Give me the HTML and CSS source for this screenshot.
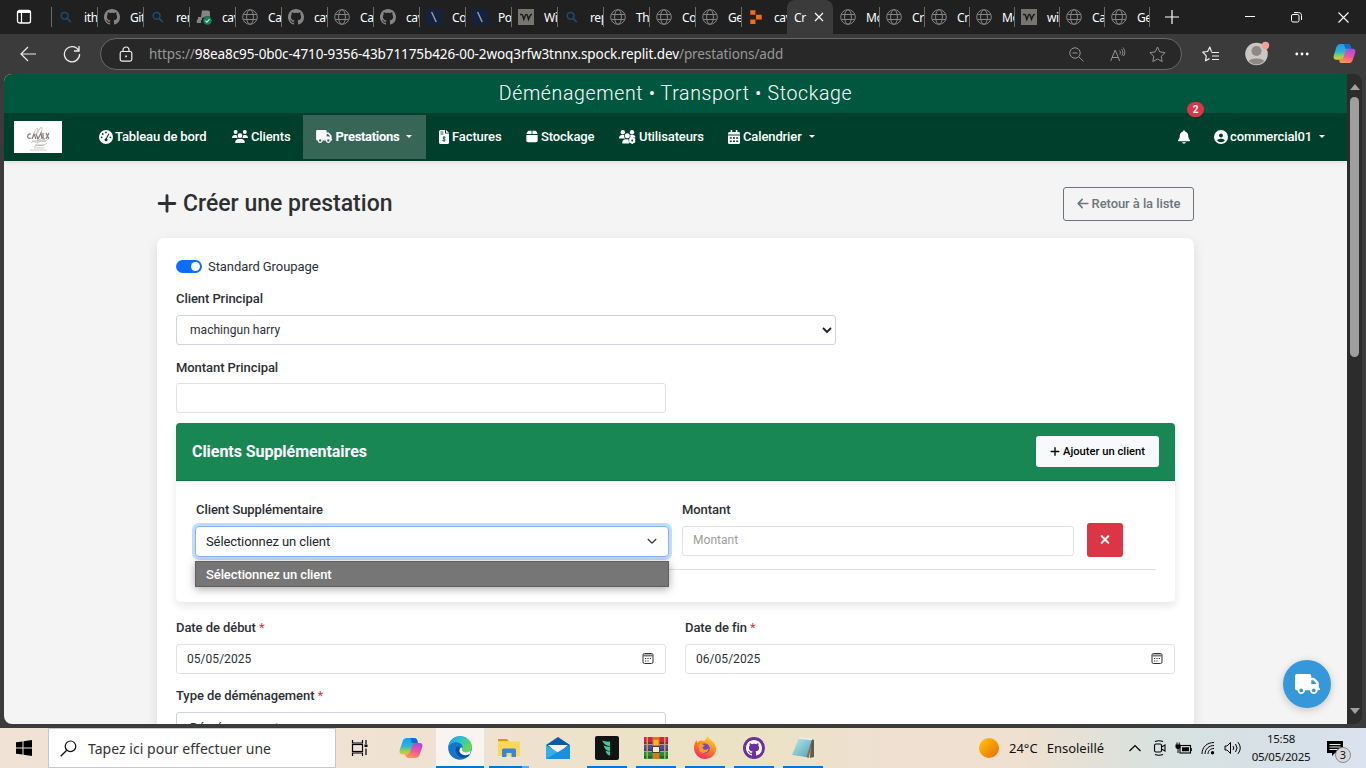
FILE: index.html
```html
<!DOCTYPE html>
<html lang="fr">
<head>
<meta charset="utf-8">
<title>Créer une prestation</title>
<link rel="stylesheet" href="styles.css">
</head>
<body>
<svg class="defs" width="0" height="0">
  <defs>
    <linearGradient id="gBlue" x1="0" y1="0" x2="0" y2="1"><stop offset="0" stop-color="#1b9cf0"/><stop offset=".5" stop-color="#2cb6d0"/><stop offset=".8" stop-color="#9ad14a"/><stop offset="1" stop-color="#f3c620"/></linearGradient>
    <linearGradient id="gPink" x1=".6" y1="0" x2=".3" y2="1"><stop offset="0" stop-color="#a64be8"/><stop offset=".5" stop-color="#f0569a"/><stop offset="1" stop-color="#ff9a50"/></linearGradient>
    <linearGradient id="gEdge" x1="0" y1="0" x2="1" y2=".5"><stop offset="0" stop-color="#1d9de0"/><stop offset=".5" stop-color="#2fc2c9"/><stop offset="1" stop-color="#66db4c"/></linearGradient>
    <linearGradient id="gSun" x1="0" y1="0" x2="1" y2="1"><stop offset="0" stop-color="#ffc90a"/><stop offset="1" stop-color="#ea6a05"/></linearGradient>
    <linearGradient id="gFox" x1=".8" y1="0" x2=".3" y2="1"><stop offset="0" stop-color="#ffe03a"/><stop offset=".45" stop-color="#ff8a1c"/><stop offset="1" stop-color="#f5246a"/></linearGradient>
    <linearGradient id="gNote" x1="0" y1="0" x2="1" y2="1"><stop offset="0" stop-color="#c4e8ee"/><stop offset="1" stop-color="#4ba3b8"/></linearGradient>
  </defs>
  <symbol id="globe" viewBox="0 0 16 16"><g fill="none" stroke="#858585"><circle cx="8" cy="8" r="7.3"/><ellipse cx="8" cy="8" rx="3.4" ry="7.3"/><path d="M1.3 5.5h13.4M1.3 10.5h13.4"/></g></symbol>
  <symbol id="github" viewBox="0 0 16 16"><path d="M8 0C3.58 0 0 3.58 0 8c0 3.54 2.29 6.53 5.47 7.59.4.07.55-.17.55-.38 0-.19-.01-.82-.01-1.49-2.01.37-2.53-.49-2.69-.94-.09-.23-.48-.94-.82-1.13-.28-.15-.68-.52-.01-.53.63-.01 1.08.58 1.23.82.72 1.21 1.87.87 2.33.66.07-.52.28-.87.51-1.07-1.78-.2-3.64-.89-3.64-3.95 0-.87.31-1.59.82-2.15-.08-.2-.36-1.02.08-2.12 0 0 .67-.21 2.2.82.64-.18 1.32-.27 2-.27s1.36.09 2 .27c1.53-1.04 2.2-.82 2.2-.82.44 1.1.16 1.92.08 2.12.51.56.82 1.27.82 2.15 0 3.07-1.87 3.75-3.65 3.95.29.25.54.73.54 1.48 0 1.07-.01 1.93-.01 2.2 0 .21.15.46.55.38A8.01 8.01 0 0016 8c0-4.42-3.58-8-8-8z" fill="currentColor"/></symbol>
  <symbol id="find" viewBox="0 0 16 16"><circle cx="6.6" cy="6.8" r="3.4" fill="none" stroke="#1c4a70" stroke-width="1.5"/><path d="M9.2 9.4l3.6 3.7" stroke="#1c4a70" stroke-width="1.8"/></symbol>
  <symbol id="slash" viewBox="0 0 16 16"><path d="M0 0h16v16H0z" fill="#15223f"/><path d="M5.6 3l4.6 10" stroke="#9a9a9a" stroke-width="1.5"/></symbol>
  <symbol id="wave" viewBox="0 0 16 16"><path d="M0 0h16v16H0z" fill="#77756f"/><path d="M2 5.500h1.500q1 0 1.300 1.500l1 3.300 1.700-4.300q.3-.5 1-.5 .7 0 1 1.200l1 3.600 1.500-3.500Q12.600 5.300 14 5.500" fill="none" stroke="#191919" stroke-width="1.400"/></symbol>
  <symbol id="access" viewBox="0 0 16 16"><path d="M6 1.500h6q2 0 2 2v4H9.500L6 9v2H5v3H1q-1-3 1-4v-2h3z" fill="#858585"/><circle cx="11.500" cy="11.500" r="4.300" fill="#11805c"/><path d="M9.400 11.600l1.500 1.500 2.700-3" fill="none" stroke="#c9e6dc" stroke-width="1.200"/></symbol>
  <symbol id="replit" viewBox="0 0 12 14"><path d="M1 1h4.500v4H1zM6 5h5v4.200H6zM1 9.200h4.500v4H1z" fill="#f96a0c"/></symbol>
  <symbol id="plus" viewBox="0 0 448 512"><path fill="currentColor" d="M256 80c0-17.700-14.300-32-32-32s-32 14.300-32 32V224H48c-17.700 0-32 14.300-32 32s14.300 32 32 32H192V432c0 17.700 14.300 32 32 32s32-14.300 32-32V288H400c17.700 0 32-14.300 32-32s-14.300-32-32-32H256V80z"/></symbol>
  <symbol id="truck" viewBox="0 0 640 512"><path fill="currentColor" d="M48 0C21.500 0 0 21.500 0 48V368c0 26.500 21.500 48 48 48H64c0 53 43 96 96 96s96-43 96-96H384c0 53 43 96 96 96s96-43 96-96h32c17.700 0 32-14.300 32-32s-14.300-32-32-32V288 256 237.300c0-17-6.700-33.300-18.700-45.300L512 114.700c-12-12-28.300-18.700-45.300-18.700H416V48c0-26.500-21.500-48-48-48H48zM416 160h50.700L544 237.300V256H416V160zM112 416a48 48 0 1 1 96 0 48 48 0 1 1 -96 0zm368-48a48 48 0 1 1 0 96 48 48 0 1 1 0-96z"/></symbol>
  <symbol id="cal" viewBox="0 0 14 14"><rect x="2" y="1.500" width="10" height="10" rx="1.500" fill="none" stroke="#333"/><path d="M2 3.500h10" stroke="#777" stroke-width="2"/><path d="M4 6.500h1.200M6.400 6.500h1.200M8.800 6.500H10M4 9h1.200M6.400 9h1.200" stroke="#333" stroke-width="1.200"/></symbol>
  <symbol id="copilot" viewBox="0 0 24 22"><path d="M8 1h7c2 0 3 1 3.500 3l.5 2c-3-.5-4.500.5-5.500 3.500L11.500 15c-.7 2-2 2.500-4 2.500H3.500C1 17.500 0 15.500.7 13L3.500 4.500C4.200 2.200 5.500 1 8 1z" fill="url(#gBlue)"/><path d="M11 1h4c2 0 3 1 3.500 3l.5 2h-5.500c-1.500 0-1.500-5-2.500-5z" fill="#1769d2"/><path d="M16 21H9.500c-2 0-2.700-1-3-2.500L6 17.500c3 .3 4.500-1 5.500-4l1.500-4.500C13.700 6.500 15 6 17 6h3.500c2.500 0 3.500 1.500 2.800 4L20.500 18c-.7 2-2 3-4.500 3z" fill="url(#gPink)"/></symbol>
</svg>

<header class="tabbar">
  <div class="workspace"><svg width="16" height="16" viewBox="0 0 16 16"><rect x="1.500" y="1.500" width="13" height="12.500" rx="2" fill="none" stroke="#fff" stroke-width="1.300"/><path d="M1.500 3h13" stroke="#fff" stroke-width="2"/><path d="M5.500 3v11" stroke="#fff" stroke-width="1.200"/></svg></div>
  <div class="tab"><svg class="fav"><use href="#find"/></svg><span>ith</span></div>
  <div class="tab"><svg class="fav"><use href="#github"/></svg><span>Git</span></div>
  <div class="tab"><svg class="fav"><use href="#find"/></svg><span>rer</span></div>
  <div class="tab"><svg class="fav"><use href="#access"/></svg><span>cav</span></div>
  <div class="tab"><svg class="fav"><use href="#globe"/></svg><span>Ca</span></div>
  <div class="tab"><svg class="fav"><use href="#github"/></svg><span>cav</span></div>
  <div class="tab"><svg class="fav"><use href="#globe"/></svg><span>Ca</span></div>
  <div class="tab"><svg class="fav"><use href="#github"/></svg><span>cav</span></div>
  <div class="tab"><svg class="fav"><use href="#slash"/></svg><span>Co</span></div>
  <div class="tab"><svg class="fav"><use href="#slash"/></svg><span>Po</span></div>
  <div class="tab"><svg class="fav"><use href="#wave"/></svg><span>Wi</span></div>
  <div class="tab"><svg class="fav"><use href="#find"/></svg><span>rep</span></div>
  <div class="tab"><svg class="fav"><use href="#globe"/></svg><span>Th</span></div>
  <div class="tab"><svg class="fav"><use href="#globe"/></svg><span>Co</span></div>
  <div class="tab"><svg class="fav"><use href="#globe"/></svg><span>Ge</span></div>
  <div class="tab"><svg class="fav"><use href="#replit"/></svg><span>cav</span></div>
  <div class="tab active"><span>Cr</span><svg width="10" height="10" viewBox="0 0 10 10"><path d="M1 1l8 8M9 1L1 9" stroke="#fff" stroke-width="1.200"/></svg></div>
  <div class="tab n first"><svg class="fav"><use href="#globe"/></svg><span>Mo</span></div>
  <div class="tab n"><svg class="fav"><use href="#globe"/></svg><span>Cr</span></div>
  <div class="tab n"><svg class="fav"><use href="#globe"/></svg><span>Cr</span></div>
  <div class="tab n"><svg class="fav"><use href="#globe"/></svg><span>Mo</span></div>
  <div class="tab n"><svg class="fav"><use href="#wave"/></svg><span>wi</span></div>
  <div class="tab n"><svg class="fav"><use href="#globe"/></svg><span>Ca</span></div>
  <div class="tab n end"><svg class="fav"><use href="#globe"/></svg><span>Ge</span></div>
  <svg class="newtab" width="14" height="14" viewBox="0 0 14 14"><path d="M7 0v14M0 7h14" stroke="#fff" stroke-width="1.200"/></svg>
  <div class="winbtns">
    <svg width="10" height="10" viewBox="0 0 10 10"><path d="M0 4.500h10" stroke="#fff"/></svg>
    <svg width="11" height="11" viewBox="0 0 11 11"><rect x=".5" y="2.500" width="7.500" height="7.500" rx="1.500" fill="none" stroke="#fff"/><path d="M3 .6h4.500c2 0 3 1 3 3V8" fill="none" stroke="#fff"/></svg>
    <svg width="11" height="11" viewBox="0 0 11 11"><path d="M.5.5l10 10M10.500.5l-10 10" stroke="#fff" stroke-width="1.100"/></svg>
  </div>
</header>

<div class="toolbar">
  <svg class="back" width="16" height="16" viewBox="0 0 16 16"><path d="M16 8H1M8 1L1 8l7 7" fill="none" stroke="#eee" stroke-width="1.200"/></svg>
  <svg class="reload" width="18" height="18" viewBox="0 0 18 18"><path d="M15.800 5.800A7.600 7.600 0 1 0 16.600 9M16 1v5h-5" fill="none" stroke="#eee" stroke-width="1.300"/></svg>
  <div class="url">
    <svg width="14" height="16" viewBox="0 0 14 16"><rect x="1.200" y="5.500" width="11.600" height="9.600" rx="1.800" fill="none" stroke="#eee" stroke-width="1.200"/><path d="M4 5.500V4a3 3 0 0 1 6 0v1.500" fill="none" stroke="#eee" stroke-width="1.200"/><rect x="6.200" y="9.500" width="1.700" height="1.700" fill="#eee"/></svg>
    <div class="addr">https://<b>98ea8c95-0b0c-4710-9356-43b71175b426-00-2woq3rfw3tnnx.spock.replit.dev</b>/prestations/add</div>
    <svg class="u1" width="15" height="15" viewBox="0 0 15 15"><g fill="none" stroke="#949494"><circle cx="6" cy="6" r="5.200"/><path d="M3.500 6h5M10 10l4.500 4.500"/></g></svg>
    <svg class="u2" width="16" height="15" viewBox="0 0 16 15"><g fill="none" stroke="#949494"><path d="M.7 14L5.200 3l4.500 11M2.200 10.500h6M9.500 3.500c1 1 1.200 2.500.3 4M11.500 2c1.700 1.800 1.700 4.500.3 6.500M12.800.5c2.400 2.300 2.600 6 .7 8.500"/></g></svg>
    <svg class="u3" width="17" height="17" viewBox="0 0 17 17"><path d="M8.500 1l2.300 4.900 5.300.7-3.900 3.700 1 5.300-4.700-2.600-4.700 2.600 1-5.300L.9 6.600l5.300-.7z" fill="none" stroke="#949494" stroke-linejoin="round"/></svg>
  </div>
  <svg class="favs" width="17" height="16" viewBox="0 0 17 16"><path d="M9.500 5.800L7.800 1 5.600 5.500l-4.900.7 3.600 3.600-.8 5 4-2.200" fill="none" stroke="#eee" stroke-width="1.200" stroke-linejoin="round"/><path d="M9.500 6.500H17M10 10h7M10 13.500h7" stroke="#eee" stroke-width="1.200"/></svg>
  <svg class="avatar" width="25" height="25" viewBox="0 0 25 25"><circle cx="11.500" cy="13" r="11.300" fill="#c9c6c3"/><circle cx="11.500" cy="10" r="5" fill="#8b8886"/><path d="M4 20c1-3.500 14-3.500 15 0-3.500 4.500-11.500 4.500-15 0z" fill="#8b8886"/><circle cx="20.500" cy="4.500" r="3.700" fill="#f5a09b"/></svg>
  <svg class="dots" width="14" height="4" viewBox="0 0 14 4"><g fill="#fff"><circle cx="1.800" cy="2" r="1.400"/><circle cx="7" cy="2" r="1.400"/><circle cx="12.200" cy="2" r="1.400"/></g></svg>
  <svg class="cop" width="23" height="21"><use href="#copilot"/></svg>
</div>

<div class="frame">
<div class="view">
  <main class="page">
    <div class="slogan">Déménagement • Transport • Stockage</div>
    <nav class="nav">
      <div class="logo"><svg width="48" height="32" viewBox="0 0 48 32"><g fill="none" stroke="#b5aeae" stroke-width=".8"><path d="M20 12c3-7 5-5 3-1s-1 4 2-2 4-1 2 3"/><path d="M17 13c-4-1-5 6 0 4M18 18l2-5 2 5M22 13l2 5 3-6 1 6M29 12v6h2M32 12l3 6M35 12l-3 6" stroke="#857a7a" stroke-width="1.200"/><path d="M17 22c4-4 5 2 8-1s5 2 9-3M20 26c5-4 8 1 13-4M23 20l6-3M18 20h14M21 24h9"/></g><path d="M16 29h17M20 27h11" stroke="#e2dddd" stroke-width="1.500"/></svg></div>
      <div class="item i1"><svg width="14" height="14" viewBox="0 0 14 14"><circle cx="7" cy="7" r="7" fill="#fff"/><g fill="#003f2b"><circle cx="7" cy="2.500" r=".9"/><circle cx="3.700" cy="4" r=".9"/><circle cx="2.600" cy="7.300" r=".9"/><circle cx="11.400" cy="7.300" r=".9"/><circle cx="7" cy="9.800" r="1.500"/></g><path d="M7 9.500l2.800-5.700" stroke="#003f2b" stroke-width="1.100"/></svg><span>Tableau de bord</span></div>
      <div class="item i2"><svg width="16" height="13" viewBox="0 0 640 512"><path fill="#fff" d="M144 0a80 80 0 1 1 0 160A80 80 0 1 1 144 0zM512 0a80 80 0 1 1 0 160A80 80 0 1 1 512 0zM0 298.700C0 239.800 47.800 192 106.700 192h42.700c15.900 0 31 3.500 44.600 9.700c-1.300 7.200-1.900 14.700-1.900 22.300c0 38.200 16.800 72.500 43.300 96c-.2 0-.4 0-.7 0H21.300C9.600 320 0 310.400 0 298.700zM405.300 320c-.2 0-.4 0-.7 0c26.600-23.500 43.300-57.800 43.300-96c0-7.600-.7-15-1.900-22.300c13.600-6.300 28.700-9.700 44.600-9.700h42.700C592.200 192 640 239.800 640 298.700c0 11.800-9.600 21.300-21.300 21.300H405.300zM224 224a96 96 0 1 1 192 0 96 96 0 1 1 -192 0zM128 485.300C128 411.700 187.700 352 261.300 352H378.700C452.300 352 512 411.700 512 485.300c0 14.700-11.900 26.700-26.700 26.700H154.700c-14.700 0-26.700-11.900-26.700-26.700z"/></svg><span>Clients</span></div>
      <div class="item i3"><svg width="16.500" height="13"><use href="#truck"/></svg><span>Prestations</span><i class="caret"></i></div>
      <div class="item i4"><svg width="10" height="14" viewBox="0 0 10 14"><path d="M1.500 0H6v3.500h4V12.500Q10 14 8.500 14h-7Q0 14 0 12.500v-11Q0 0 1.500 0z" fill="#fff"/><path d="M7 0l3 2.800H7z" fill="#fff"/><path d="M1.500 2h2.800M1.500 4h2.800" stroke="#003f2b" stroke-width=".9"/><path d="M6.600 7.300C4 6.600 3 8.400 5 8.900s1.900 2.500-1.700 1.600M5 6v6" fill="none" stroke="#003f2b" stroke-width=".8"/></svg><span>Factures</span></div>
      <div class="item i5"><svg width="12" height="13" viewBox="0 0 448 512"><path fill="#fff" d="M50.700 58.500L0 160H208V32H93.700C75.500 32 58.900 42.300 50.700 58.500zM240 160H448L397.300 58.500C389.100 42.300 372.500 32 354.300 32H240V160zm208 32H0V416c0 35.300 28.700 64 64 64H384c35.300 0 64-28.700 64-64V192z"/></svg><span>Stockage</span></div>
      <div class="item i6"><svg width="17" height="14" viewBox="0 0 17 14"><g fill="#fff"><circle cx="3.800" cy="2.300" r="2.200"/><circle cx="13" cy="2.300" r="2.200"/><circle cx="8.300" cy="5.700" r="2.500"/><path d="M0 8.500Q0 5 3 5h2.200Q4.500 7 6.300 8.500zM10.500 8Q12 7 11.200 5H14q2.500 0 2.500 2.500zM3.200 13.500Q3 9.200 7 9.200h2.500L10 13.500z"/><circle cx="13.200" cy="10.500" r="3"/><path d="M13.200 7v7M10.200 8.700l6 3.600M16.200 8.700l-6 3.600" stroke="#fff" stroke-width="1.300"/></g><circle cx="13.200" cy="10.500" r="1" fill="#003f2b"/></svg><span>Utilisateurs</span></div>
      <div class="item i7"><svg width="12" height="14" viewBox="0 0 12 14"><path d="M0 3.500Q0 2 1.500 2h9Q12 2 12 3.500V4.600H0zM0 5.500h12v7q0 1.500-1.500 1.500h-9Q0 14 0 12.500zM2.600 0h1.600v3H2.600zM7.800 0h1.600v3H7.800z" fill="#fff"/><path d="M1.800 8h2M5 8h2M8.200 8h2M1.800 11.300h2M5 11.300h2M8.200 11.300h2" stroke="#003f2b" stroke-width="1.500"/></svg><span>Calendrier</span><i class="caret"></i></div>
      <div class="bell"><svg width="12" height="14" viewBox="0 0 448 512"><path fill="#fff" d="M224 0c-17.700 0-32 14.300-32 32V51.200C119 66 64 130.600 64 208v18.800c0 47-17.300 92.400-48.500 127.600l-7.400 8.300c-8.400 9.400-10.400 22.900-5.300 34.400S19.400 416 32 416H416c12.600 0 24-7.400 29.200-18.900s3.100-25-5.300-34.400l-7.400-8.300C401.300 319.200 384 273.900 384 226.800V208c0-77.400-55-142-128-156.800V32c0-17.700-14.300-32-32-32zm45.300 493.300c12-12 18.700-28.300 18.700-45.300H224 160c0 17 6.700 33.300 18.700 45.300s28.300 18.700 45.300 18.700s33.300-6.700 45.300-18.700z"/></svg><span class="count">2</span></div>
      <div class="item i8"><svg width="14" height="14" viewBox="0 0 512 512"><path fill="#fff" d="M399 384.200C376.900 345.800 335.400 320 288 320H224c-47.400 0-88.900 25.800-111 64.200c35.200 39.200 86.200 63.800 143 63.800s107.800-24.700 143-63.800zM0 256a256 256 0 1 1 512 0A256 256 0 1 1 0 256zm256 16a72 72 0 1 0 0-144 72 72 0 1 0 0 144z"/></svg><span>commercial01</span><i class="caret"></i></div>
    </nav>

    <section class="head">
      <h1><svg width="20" height="23"><use href="#plus"/></svg>Créer une prestation</h1>
      <a class="return"><svg width="12" height="13" viewBox="0 0 448 512"><path fill="currentColor" d="M9.400 233.400c-12.500 12.500-12.500 32.800 0 45.300l160 160c12.500 12.500 32.800 12.500 45.300 0s12.500-32.800 0-45.300L109.200 288 416 288c17.700 0 32-14.300 32-32s-14.300-32-32-32l-306.700 0L214.600 118.600c12.500-12.500 12.500-32.800 0-45.300s-32.800-12.500-45.300 0l-160 160z"/></svg><span>Retour à la liste</span></a>
    </section>

    <form class="card">
      <div class="toggle"><i class="switch"></i><span>Standard Groupage</span></div>
      <label>Client Principal</label>
      <div class="field wide"><span>machingun harry</span><svg width="10" height="7" viewBox="0 0 10 7"><path d="M1 1l4 4 4-4" fill="none" stroke="#222" stroke-width="1.900"/></svg></div>
      <label class="second">Montant Principal</label>
      <div class="field half amount"></div>
      <div class="panel">
        <div class="phead"><h2>Clients Supplémentaires</h2><button type="button"><svg width="10" height="11"><use href="#plus"/></svg>Ajouter un client</button></div>
        <div class="pbody">
          <div class="prow">
            <div class="col client">
              <label>Client Supplémentaire</label>
              <div class="field focus"><span>Sélectionnez un client</span><svg width="10" height="7" viewBox="0 0 10 7"><path d="M.8 1L5 5.200 9.200 1" fill="none" stroke="#343a40" stroke-width="1.300"/></svg></div>
              <div class="option">Sélectionnez un client</div>
            </div>
            <div class="col montant">
              <label>Montant</label>
              <div class="field ph"><span>Montant</span></div>
            </div>
            <div class="del"><svg width="10" height="13" viewBox="0 0 384 512"><path fill="#fff" stroke="#fff" stroke-width="20" d="M342.600 150.600c12.500-12.500 12.500-32.800 0-45.300s-32.800-12.500-45.300 0L192 210.700 86.600 105.400c-12.500-12.500-32.800-12.500-45.300 0s-12.500 32.800 0 45.300L146.700 256 41.400 361.400c-12.500 12.500-12.500 32.800 0 45.300s32.800 12.500 45.300 0L192 301.300 297.400 406.600c12.500 12.500 32.800 12.500 45.300 0s12.500-32.800 0-45.300L237.300 256 342.600 150.600z"/></svg></div>
          </div>
        </div>
      </div>
      <div class="dates">
        <div><label>Date de début <em>*</em></label><div class="field date"><span>05/05/2025</span><svg width="14" height="14"><use href="#cal"/></svg></div></div>
        <div><label>Date de fin <em>*</em></label><div class="field date"><span>06/05/2025</span><svg width="14" height="14"><use href="#cal"/></svg></div></div>
      </div>
      <label class="type">Type de déménagement <em>*</em></label>
      <div class="field half sel"><span>Déménagement</span></div>
    </form>
    <div class="fab"><svg width="25" height="20"><use href="#truck"/></svg></div>
  </main>
  <aside class="scroll">
    <svg width="10" height="6" viewBox="0 0 10 6"><path d="M5 0l5 6H0z" fill="#a0a0a0"/></svg>
    <div class="thumb"></div>
    <svg class="down" width="10" height="6" viewBox="0 0 10 6"><path d="M0 0h10L5 6z" fill="#a0a0a0"/></svg>
  </aside>
</div>
</div>

<footer class="taskbar">
  <div class="start"><svg width="16" height="16" viewBox="0 0 16 16"><path d="M0 2.300l6.500-.9v6.100H0zM7.500 1.200L16 0v7.500H7.500zM0 8.500h6.500v6.100L0 13.700zM7.500 8.500H16V16l-8.500-1.200z"/></svg></div>
  <div class="search"><svg width="17" height="17" viewBox="0 0 17 17"><circle cx="10.500" cy="6.300" r="5.300" fill="none" stroke="#111" stroke-width="1.200"/><path d="M6.700 10.200L.7 16.200" stroke="#111" stroke-width="1.300"/></svg><span>Tapez ici pour effectuer une</span></div>
  <div class="app tv"><svg width="17" height="16" viewBox="0 0 17 16"><path d="M1.500 0v3h10V0M1.500 16v-3h10v3" fill="none" stroke="#000" stroke-width="1.200"/><rect x="1.500" y="4.500" width="10" height="7" fill="none" stroke="#000" stroke-width="1.200"/><path d="M15 0v4M15 8.500V15" stroke="#000" stroke-width="1.200"/><path d="M13.500 4.500h3v2.500h-3z"/></svg></div>
  <div class="app"><svg width="24" height="22"><use href="#copilot"/></svg></div>
  <div class="app on cur"><svg width="24" height="24" viewBox="0 0 24 24"><circle cx="12" cy="12" r="11.800" fill="#1176d0"/><path d="M.3 11C1 4.500 6 .2 12 .2c7 0 11.800 5 11.800 10 0 4-3 6-6 6-2.500 0-4-1-3.500-2.500 2-5-3-8-7-7.500C4 6.600 1.500 8.500.3 11z" fill="url(#gEdge)"/><path d="M9 10.500c-3 4-.5 9.500 4.500 11 3.500.8 7-.5 8.500-3.200-4 1.700-8 1-9.800-1.500-1-1.500-1-3 0-4.500.5-.8 0-2.700-3.200-1.800z" fill="#0c4f9e"/><path d="M12 12.300c1-1.500 3-.5 2.300 1.400-.5 1.500 1 2.500 3.500 2.500 2 0 4-.8 5-2.300l-.8 4.200c-4 1.800-8 1.200-9.800-1.300-1-1.500-1-3-.2-4.500z" fill="#f8f3ee"/></svg></div>
  <div class="app on multi"><svg width="22" height="20" viewBox="0 0 22 20"><path d="M0 1h9l2 2.500H0z" fill="#d39a0a"/><path d="M0 3.500h22V18H0z" fill="#ffd55a"/><path d="M4 19v-7q0-1.500 1.500-1.500h11Q18 10.500 18 12v7h-4.500v-4h-5v4z" fill="#3a86cf"/></svg></div>
  <div class="app"><svg width="24" height="24" viewBox="0 0 24 24"><path d="M0 9L12 1l12 8v14H0z" fill="#0d5ba8"/><path d="M2 9h20l-10 9z" fill="#f3f3f3"/><path d="M0 9l12 7.500L24 9v14H0z" fill="#31b0ee"/><path d="M0 23L24 9v14z" fill="#1790df"/></svg></div>
  <div class="app on"><svg width="24" height="24" viewBox="0 0 24 24"><rect width="24" height="24" rx="2" fill="#121414"/><path d="M7 4.500q4 1.500 8 1v4.500q-5 0-8-5.500zM8.500 9.500q3 1.500 6.500 1V15q-4.500 0-6.500-5.500zM10.500 14.500q2 1.200 4.500 1v4q-3.500-.5-4.500-5z" fill="#38d09a"/></svg></div>
  <div class="app on"><svg width="24" height="22" viewBox="0 0 24 22"><path d="M0 0h24v7H0z" fill="#ce2456"/><path d="M0 7.500h24V14H0z" fill="#4a4ab5"/><path d="M0 14.500h24V22H0z" fill="#169050"/><path d="M0 6h24M0 13h24M0 20h24" stroke="#242424" stroke-opacity=".5" stroke-width="1.500"/><path d="M2.500 0h1.500v22H2.500zM20 0h1.500v22H20z" fill="#dba11c"/><path d="M8.500 0h7v22h-7z" fill="#d77a18"/><path d="M8 9h8v7H8z" fill="#5b3a1d"/><path d="M9 10h6v5H9z" fill="#f6ead2"/><path d="M9.500 3h5v5h-5z" fill="#f5b52c"/></svg></div>
  <div class="app on"><svg width="24" height="24" viewBox="0 0 24 24"><path d="M1 12C1 8 2 6 4 4v3c1-1.500 2-2 4-2.500 1.500 0 2 .5 3 .5 2-.5 2-3.500 4-5 .5 4 8 5 8 13 0 6-5 10-11 10S1 18 1 12z" fill="url(#gFox)"/><circle cx="11.700" cy="12.500" r="5" fill="#6b49c8"/><path d="M5 9c3-2 5-1 7 1-3 .5-3 2.500-1 3.500 2 .8 4-.5 4.500-1.500C16 17 9 18.500 6.500 15z" fill="#ff9c28"/></svg></div>
  <div class="app on"><svg width="22" height="22" viewBox="0 0 22 22"><circle cx="11" cy="11" r="11" fill="#6d2e9e"/><circle cx="11" cy="11" r="8" fill="#6d2e9e"/><svg x="3" y="3" width="16" height="16" color="#fff"><use href="#github"/></svg></svg></div>
  <div class="app on"><svg width="24" height="22" viewBox="0 0 24 22"><path d="M8 1l13 2-3 18-6-2z" fill="#8d6d49"/><path d="M20 2l3 1v17l-4 1z" fill="#5f5a52"/><path d="M8 1l13 1.500L15.500 20 1 18z" fill="url(#gNote)"/><path d="M8 1l13 1.500" stroke="#eee" stroke-width="1.600"/></svg></div>
  <div class="weather"><svg width="20" height="20" viewBox="0 0 20 20"><circle cx="10" cy="10" r="10" fill="url(#gSun)"/></svg><span class="deg">24°C</span><span class="sky">Ensoleillé</span></div>
  <div class="tray">
    <svg width="12" height="8" viewBox="0 0 12 8"><path d="M.5 7L6 1.500 11.500 7" fill="none" stroke="#000" stroke-width="1.200"/></svg>
    <svg width="13" height="16" viewBox="0 0 13 16"><g fill="none" stroke="#000" stroke-width="1.100"><rect x="1.500" y="4" width="7" height="8" rx="1.500"/><path d="M8.500 7L12 5v6L8.500 9M2 1.500Q6 0 10 1.500M2 14.500Q6 16 10 14.500"/></g></svg>
    <svg width="17" height="13" viewBox="0 0 17 13"><rect x="5" y="3.500" width="10.500" height="7.500" fill="none" stroke="#000" stroke-width="1.100"/><path d="M7 5.300h7v4H7zM15.500 6h1.300v3h-1.300zM.5 2.500h5v3L4 7H2L.5 5.500zM1.500.5h1v2h-1zM3.700.5h1v2h-1z"/><path d="M3 7v4" stroke="#000"/></svg>
    <svg width="14" height="14" viewBox="0 0 14 14"><g fill="none" stroke="#000"><path d="M1 13C1 6 6 1.500 13 1.500M4 13c0-5 4-8.500 9-8.500M7 13c0-3.500 2.500-5.500 6-5.500"/></g><circle cx="11.500" cy="11.800" r="1.700"/></svg>
    <svg width="18" height="14" viewBox="0 0 18 14"><g fill="none" stroke="#000"><path d="M1 5h2l3.500-3.500v11L3 9H1zM9 5q1.500 2 0 4M11.500 3q3 4 0 8M14 1.200q4.500 5.800 0 11.600"/></g></svg>
  </div>
  <div class="clock"><div>15:58</div><div>05/05/2025</div></div>
  <div class="notif"><svg width="16" height="15" viewBox="0 0 16 15"><path d="M0 0h16v12H8l-3 3v-3H0z"/><path d="M2.500 3.500h11M2.500 6h11M2.500 8.500h8" stroke="#e5e8ee"/></svg><span>3</span></div>
</footer>
</body>
</html>
```

FILE: styles.css
```css
* { box-sizing: border-box; }
body { margin: 0; width: 1366px; height: 768px; overflow: hidden; background: #3a3a3a; font-family: Roboto, "Liberation Sans", sans-serif; color: #2c2f33; }
svg { display: block; flex: none; }
.defs { position: absolute; }

/* tab strip */
.tabbar { height: 34px; background: #202020; display: flex; align-items: center; font-family: "Noto Sans", "Open Sans", sans-serif; font-size: 12px; color: #fff; }
.workspace { width: 51px; padding-left: 16px; }
.tab { width: 46px; height: 20px; padding-left: 6px; border-left: 1px solid #6a6a6a; display: flex; align-items: center; white-space: nowrap; overflow: hidden; }
.tab span { margin-left: 10px; letter-spacing: -.4px; }
.fav { width: 16px; height: 16px; color: #858585; }
.tab.active { width: 46px; height: 34px; background: #3b3b3b; border: 0; border-radius: 8px 8px 0 0; padding-left: 7px; }
.tab.active span { margin: 0 8px 0 0; }
.tab.n { width: 45px; }
.tab.n.first { width: 46px; border-color: transparent; }
.tab.n.end { width: 46px; border-right: 1px solid #6a6a6a; }
.newtab { margin-left: 15px; }
.winbtns { margin-left: auto; padding-right: 17px; display: flex; gap: 36px; align-items: center; }

/* address bar */
.toolbar { height: 39px; background: #3b3b3b; display: flex; align-items: center; }
.back { margin-left: 20px; }
.reload { margin-left: 27px; }
.url { margin-left: 19px; width: 1082px; height: 32px; margin-top: 1px; border: 1px solid #696969; border-radius: 16px; background: #282828; display: flex; align-items: center; padding-left: 18px; font-family: "Noto Sans", "Open Sans", sans-serif; font-size: 13.500px; color: #989898; }
.addr { margin-left: 16px; width: 920px; white-space: nowrap; letter-spacing: -.09px; }
.addr b { font-weight: 400; color: #fff; }
.u2 { margin-left: 26px; }
.u3 { margin-left: 23px; }
.favs { margin-left: 20px; }
.avatar { margin-left: 26px; }
.dots { margin-left: 25px; }
.cop { margin-left: 24px; }

/* page viewport */
.frame { height: 655px; padding: 1px 4px 4px; background: #3b3b3b; }
.view { height: 650px; border-radius: 8px; overflow: hidden; display: flex; }
.page { position: relative; width: 1343px; background: #f4f4f4; overflow: hidden; }
.scroll { width: 15px; background: #2c2c2c; display: flex; flex-direction: column; align-items: center; padding: 10px 0; }
.thumb { width: 9px; height: 260px; margin-top: 7px; border-radius: 5px; background: #9f9f9f; }
.down { margin-top: auto; }

.slogan { height: 39px; background: #00573d; color: #fff; text-align: center; font-size: 19.500px; font-weight: 300; letter-spacing: .65px; line-height: 39px; }
.nav { height: 48px; background: #003f2b; display: flex; align-items: center; padding-left: 10px; color: #fff; font-size: 13px; font-weight: 500; box-shadow: 0 2px 4px rgba(0,0,0,.08); position: relative; }
.logo { width: 48px; height: 32px; background: #fff; margin-right: 24px; }
.item { height: 44px; display: flex; align-items: center; padding-left: 13px; padding-bottom: 1px; white-space: nowrap; letter-spacing: -.12px; }
.item span { margin-left: 3px; }
.caret { border: 3px solid transparent; border-top-color: #fff; border-bottom: 0; margin-left: 7px; }
.i1 { width: 133px; } .i1 span { margin-left: 2px; }
.i2 { width: 84px; }
.i3 { width: 123px; background: #376656; font-weight: 700; letter-spacing: -.3px; }
.i4 { width: 88px; }
.i5 { width: 93px; padding-left: 12px; }
.i6 { width: 109px; padding-left: 12px; }
.i7 { width: 112px; padding-left: 12px; }
.bell { position: relative; margin-left: auto; padding-bottom: 1px; }
.count { position: absolute; left: 9px; top: -28px; width: 17px; height: 15px; border-radius: 8px; background: #dc3545; font-size: 10px; font-weight: 700; line-height: 15px; text-align: center; }
.i8 { width: 157px; padding-left: 24px; } .i8 span { margin-left: 2px; }

.head { height: 77px; margin: 0 153px; display: flex; justify-content: space-between; align-items: center; padding-top: 8px; }
h1 { margin: 0; font-size: 23px; font-weight: 500; display: flex; align-items: center; gap: 6px; line-height: 28px; color: #2d3030; }
.return { width: 131px; height: 34px; border: 1px solid #6c757d; border-radius: 3px; color: #6c757d; font-size: 13px; font-weight: 500; letter-spacing: -.07px; display: flex; align-items: center; justify-content: center; gap: 3px; }

.card { display: block; margin: 0 153px; height: 560px; background: #fff; border-radius: 7px; box-shadow: 0 4px 12px rgba(0,0,0,.1); padding: 18px 19px; }
label { display: block; font-size: 13px; font-weight: 500; line-height: 20px; letter-spacing: -.07px; }
em { font-style: normal; color: #dc3545; font-weight: 400; }
.toggle { display: flex; align-items: center; height: 20px; font-size: 13px; letter-spacing: -.07px; margin-bottom: 13px; }
.switch { width: 26px; height: 13px; border-radius: 7px; background: #0d6efd; margin-right: 6px; display: flex; justify-content: flex-end; padding: 2px; }
.switch::after { content: ""; width: 9px; height: 9px; border-radius: 50%; background: #fff; }
.field { height: 30px; border: 1px solid #dee2e6; border-radius: 3px; background: #fff; font-size: 12px; letter-spacing: .04px; display: flex; align-items: center; justify-content: space-between; padding: 0 10px; }
.wide { width: 660px; margin-top: 6px; padding: 0 3px 0 13px; border-color: #cfd4da; }
.second { margin-top: 13px; }
.half { width: 490px; margin-top: 6px; }
.amount { margin-top: 5px; }

.panel { margin-top: 10px; height: 179px; border-radius: 5px; box-shadow: 0 4px 8px rgba(0,0,0,.1); }
.phead { height: 58px; background: #198754; border-bottom: 1px solid #157347; border-radius: 4px 4px 0 0; display: flex; align-items: center; justify-content: space-between; padding: 0 16px; }
h2 { margin: 0; color: #fff; font-size: 16px; font-weight: 700; letter-spacing: -.05px; }
.phead button { width: 123px; height: 31px; border: 0; border-radius: 3px; background: #f8f9fa; font: 500 11.200px Roboto, sans-serif; color: #000; display: flex; align-items: center; justify-content: center; gap: 3px; padding: 0; }
.pbody { padding: 19px 19px 18px; }
.prow { height: 70px; border-bottom: 1px solid #dee2e6; display: flex; gap: 13px; }
.col .field { margin-top: 6px; }
.client { width: 474px; position: relative; }
.client label { margin-left: 1px; }
.montant { width: 392px; }
.col .focus { height: 31px; font-size: 13px; letter-spacing: -.1px; border-color: #86b7fe; border-radius: 4px; box-shadow: 0 0 0 3px #c2dbfe; padding: 0 11px 0 10px; color: #212529; }
.ph { color: #9c9c9c; }
.col .ph { padding-bottom: 2px; }
.option { position: absolute; left: 0; top: 61px; width: 474px; height: 26px; background: #767676; border: 1px solid #5f5f5f; color: #fff; font-size: 13px; letter-spacing: -.1px; line-height: 25px; padding-left: 10px; font-weight: 500; box-shadow: 0 2px 8px rgba(0,0,0,.35); }
.del { width: 36px; height: 34px; margin-top: 23px; border-radius: 3px; background: #dc3545; display: flex; align-items: center; justify-content: center; padding-bottom: 2px; }

.dates { display: grid; grid-template-columns: 490px 490px; gap: 19px; margin-top: 16px; }
.date { margin-top: 6px; }
.type { margin-top: 12px; }
.sel { margin-top: 6px; padding-left: 13px; border-color: #cfd4da; font-size: 12.500px; }
.fab { position: absolute; right: 16px; bottom: 16px; width: 48px; height: 48px; border-radius: 50%; background: #3498db; color: #fff; display: flex; align-items: center; justify-content: center; box-shadow: 0 2px 8px rgba(0,0,0,.2); }

/* taskbar */
.taskbar { height: 40px; display: flex; align-items: center; background: linear-gradient(90deg, #f0e3d5 0, #efe2d3 34%, #ece2c5 48%, #ebe2c6 56%, #efe0d2 66%, #efe0d0 75%, #d7e2e0 85%, #d6e0e8 95%, #dce3f0 100%); font-family: "Noto Sans", "Open Sans", sans-serif; color: #111; }
.start { width: 48px; padding-left: 16px; }
.search { width: 288px; height: 40px; background: #fff; border: 1px solid #c8c8c8; display: flex; align-items: center; padding-left: 11px; font-size: 14px; color: #333; }
.search span { margin-left: 11px; white-space: nowrap; letter-spacing: .03px; }
.app { width: 40px; height: 40px; margin-right: 9px; display: flex; align-items: center; justify-content: center; border-bottom: 2px solid transparent; padding-top: 2px; }
.tv { margin-left: 4px; margin-right: 11px; padding-right: 2px; }
.on { border-bottom-color: #0078d7; }
.cur { width: 48px; margin-left: -4px; margin-right: 5px; background: #f9f4ef; }
.multi { border-image: linear-gradient(90deg, #0078d7 80%, #63a8e4 80%) 1; }
.weather { margin-left: 147px; width: 150px; display: flex; align-items: center; font-size: 13px; white-space: nowrap; }
.deg { margin-left: 10px; }
.sky { margin-left: 9px; }
.tray { display: flex; align-items: center; gap: 9px; }
.tray svg:nth-child(2) { margin-left: 3px; }
.clock { width: 78px; text-align: center; font-size: 11.500px; line-height: 18px; letter-spacing: -.25px; }
.notif { position: relative; margin-left: 7px; }
.notif span { position: absolute; left: 8px; top: 6px; width: 16px; height: 16px; border: 1px solid #888; border-radius: 50%; background: #d8d8d8; font-size: 11px; line-height: 14px; text-align: center; }
.edge { width: 5px; }
```
